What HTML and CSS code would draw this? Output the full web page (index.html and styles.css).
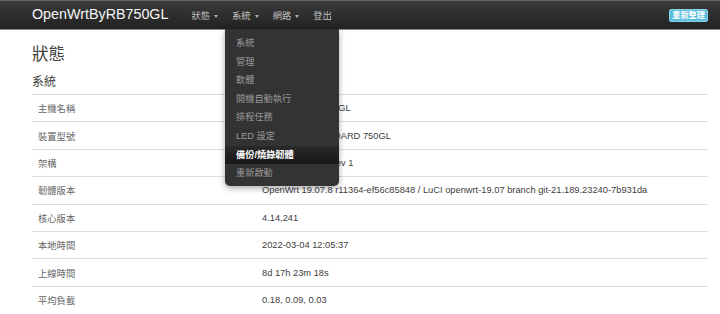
FILE: index.html
```html
<!DOCTYPE html>
<html lang="zh-Hant">
<head>
    <meta charset="UTF-8">
    <meta name="viewport" content="width=device-width, initial-scale=1.0">
    <title>OpenWrtByRB750GL - 狀態 - LuCI</title>
    <link rel="stylesheet" href="styles.css">
</head>
<body>
    <header>
        <a class="brand" href="#">OpenWrtByRB750GL</a>
        <ul class="nav">
            <li><a href="#" class="menu">狀態</a></li>
            <li class="open">
                <a href="#" class="menu">系統</a>
                <ul class="dropdown">
                    <li><a href="#">系統</a></li>
                    <li><a href="#">管理</a></li>
                    <li><a href="#">軟體</a></li>
                    <li><a href="#">開機自動執行</a></li>
                    <li><a href="#">排程任務</a></li>
                    <li><a href="#">LED 設定</a></li>
                    <li class="active"><a href="#">備份/燒錄韌體</a></li>
                    <li><a href="#">重新啟動</a></li>
                </ul>
            </li>
            <li><a href="#" class="menu">網路</a></li>
            <li><a href="#">登出</a></li>
        </ul>
        <div class="refresh">
            <span class="label">重新整理</span>
        </div>
    </header>

    <div class="container">
        <h2>狀態</h2>
        <h3>系統</h3>
        <table class="status">
            <tr><td class="key">主機名稱</td><td>OpenWrtByRB750GL</td></tr>
            <tr><td class="key">裝置型號</td><td>MikroTik RouterBOARD 750GL</td></tr>
            <tr><td class="key">架構</td><td>MIPS 24Kc V7.4 rev 1</td></tr>
            <tr><td class="key">韌體版本</td><td>OpenWrt 19.07.8 r11364-ef56c85848 / LuCI openwrt-19.07 branch git-21.189.23240-7b931da</td></tr>
            <tr><td class="key">核心版本</td><td>4.14.241</td></tr>
            <tr><td class="key">本地時間</td><td>2022-03-04 12:05:37</td></tr>
            <tr><td class="key">上線時間</td><td>8d 17h 23m 18s</td></tr>
            <tr><td class="key">平均負載</td><td>0.18, 0.09, 0.03</td></tr>
        </table>
    </div>
</body>
</html>
```

FILE: styles.css
```css
body {
    font-family: 'Liberation Sans', 'Noto Sans CJK TC', sans-serif;
    font-size: 9.3px;
    margin: 0;
    padding: 0;
    background: #fff;
    color: #404040;
}

/* Top bar */
header {
    display: flex;
    align-items: center;
    height: 30px;
    padding: 0 12px 0 32px;
    background: linear-gradient(#3a3a3a, #222);
    border-top: 1px solid #666;
    border-bottom: 1px solid #8a8a8a;
    box-sizing: border-box;
}

.brand {
    font-size: 14.3px;
    color: #f5f5f5;
    text-decoration: none;
    margin-right: 16px;
    margin-top: -2px;
}

.nav {
    list-style: none;
    margin: 0;
    padding: 0;
    display: flex;
    flex-grow: 1;
    height: 100%;
}

.nav > li {
    position: relative;
    display: flex;
    align-items: center;
}

.nav > li > a {
    color: #bfbfbf;
    text-decoration: none;
    font-size: 9.3px;
    padding: 0 7px;
}

.nav > li > a.menu::after {
    content: "";
    display: inline-block;
    margin-left: 4px;
    vertical-align: middle;
    border-left: 2.5px solid transparent;
    border-right: 2.5px solid transparent;
    border-top: 3px solid #aaa;
}

.dropdown {
    position: absolute;
    top: 28px;
    left: 0;
    width: 114px;
    list-style: none;
    margin: 0;
    padding: 5px 0 3px;
    background: #333;
    border-radius: 0 0 5px 5px;
    box-shadow: 0 2px 6px rgba(0, 0, 0, 0.35);
    z-index: 10;
}

.dropdown li a {
    display: block;
    height: 18.6px;
    line-height: 18.6px;
    padding: 0 11px;
    color: #999;
    text-decoration: none;
    font-size: 9.2px;
}

.dropdown li.active a {
    background: linear-gradient(#2a2a2a, #181818);
    color: #fff;
    font-weight: bold;
}

.refresh .label {
    display: inline-block;
    background: #5bc0de;
    border: 1px solid #8ad3ea;
    border-radius: 2px;
    color: #fff;
    font-size: 8.2px;
    font-weight: bold;
    padding: 0 2px;
    line-height: 11px;
}

/* Content */
.container {
    padding: 0 12px 0 32px;
}

h2 {
    font-size: 16.5px;
    font-weight: normal;
    line-height: 20px;
    margin: 14px 0 10px;
    color: #404040;
}

h3 {
    font-size: 12px;
    font-weight: normal;
    line-height: 16px;
    margin: 0 0 4px;
    color: #404040;
}

.status {
    width: 100%;
    border-collapse: collapse;
}

.status td {
    border-top: 1px solid #ddd;
    height: 27.4px;
    padding: 0 6px;
    box-sizing: border-box;
    vertical-align: middle;
    color: #404040;
}

.status td.key {
    width: 224px;
    color: #666;
}
```
